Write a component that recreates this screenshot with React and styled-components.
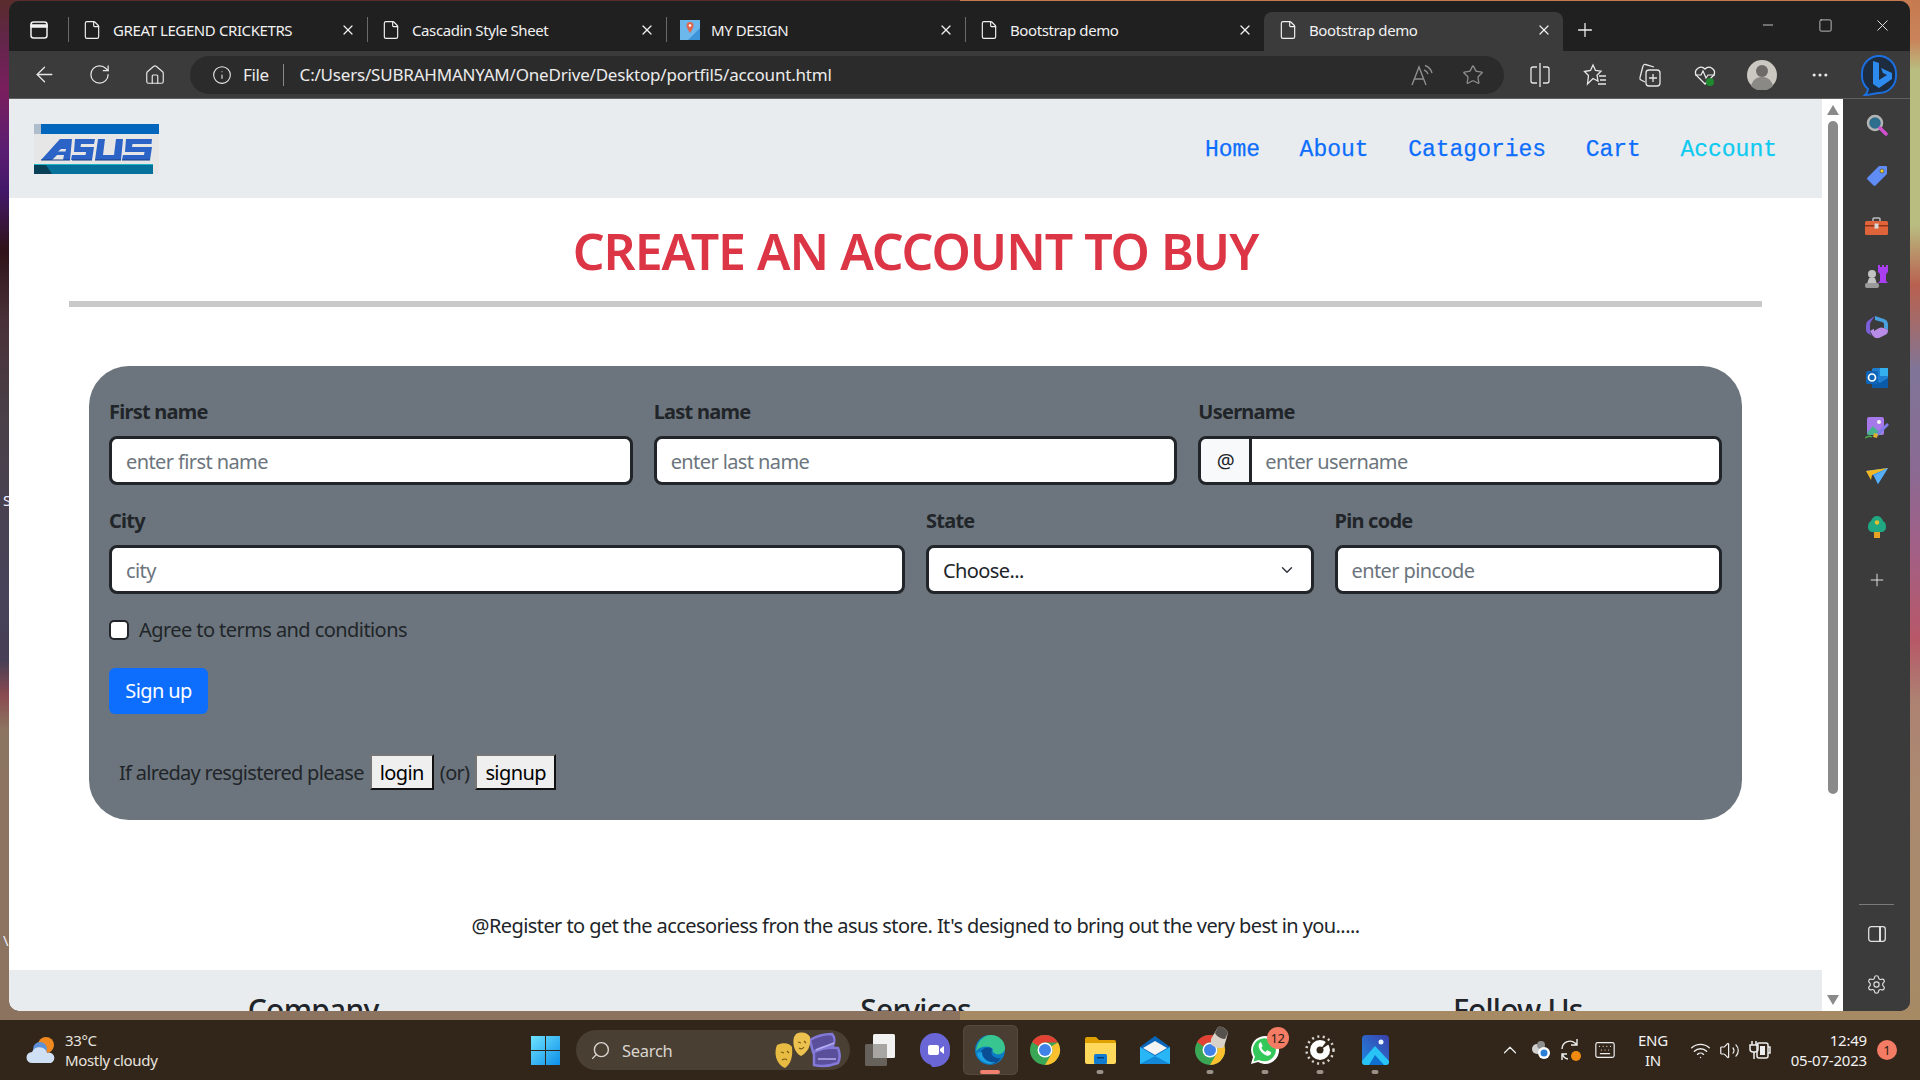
import React from "react";
import styled, { createGlobalStyle } from "styled-components";
import {
  ArrowLeft, RotateCw, Home, Info, Star, Plus, X, Minus, Square, File, MoreHorizontal,
  Settings, ChevronUp, Wifi, Volume2, Keyboard, Search,
} from "lucide-react";

const UI = `"Noto Sans", "Open Sans", sans-serif`;

const Global = createGlobalStyle`
  html, body { margin: 0; padding: 0; width: 1920px; height: 1080px; overflow: hidden; }
  * { box-sizing: border-box; }
  body { font-family: ${UI}; }
`;

const Desktop = styled.div`
  position: relative;
  width: 1920px;
  height: 1080px;
  display: flex;
  flex-direction: column;
  overflow: hidden;
  background:
    linear-gradient(180deg, #c77a50 0, #c9835a 40px, #b9bd80 70px, #b9bd80 225px, #b96050 285px, #a46a68 320px, #7f7598 370px, #8a6a92 470px, #a06088 540px, #b85868 640px, #ad8272 700px, #ab8a70 800px, #a68a64 1020px) right / 50% 100% no-repeat,
    linear-gradient(180deg, #5a2c2c 0, #62264a 40px, #7a1e5e 90px, #5a1e72 150px, #45186a 190px, #2f1319 250px, #4a3038 320px, #4a4048 420px, #47425a 600px, #463f55 660px, #8a4a50 695px, #8c7560 730px, #8b7360 1020px) left / 50% 100% no-repeat;
`;

const DesktopGlyph = styled.span`
  position: absolute;
  left: 3px;
  top: ${(p) => p.$top}px;
  font: 15px ${UI};
  color: #eef;
`;

const Window = styled.div`
  position: relative;
  z-index: 1;
  width: 1901px;
  height: 1010px;
  margin: 1px 0 0 9px;
  border-radius: 10px;
  overflow: hidden;
  display: flex;
  flex-direction: column;
  background: #3b3b3b;
`;

const TabStrip = styled.div`
  flex: none;
  height: 50px;
  display: flex;
  align-items: flex-end;
  background: #202020;
`;

const TabActions = styled.div`
  flex: none;
  width: 59px;
  height: 39px;
  display: flex;
  align-items: center;
  justify-content: center;
  padding-bottom: 4px;
`;

const Tab = styled.div`
  flex: none;
  width: 299px;
  height: 39px;
  display: flex;
  align-items: center;
  padding: 0 11px 3px 14px;
  color: #f1f1f1;
  border-radius: 8px 8px 0 0;
  background: ${(p) => (p.$active ? "#3b3b3b" : "transparent")};
  position: relative;
  &::before {
    content: "";
    display: ${(p) => (p.$active ? "none" : "block")};
    position: absolute;
    left: 0;
    top: 5px;
    height: 25px;
    width: 1px;
    background: #6a6a6a;
  }
`;

const TabTitle = styled.span`
  margin-left: 11px;
  flex: 1;
  font-size: 15px;
  letter-spacing: -0.4px;
  white-space: nowrap;
`;

const NewTab = styled.div`
  flex: none;
  width: 44px;
  height: 39px;
  display: flex;
  align-items: center;
  justify-content: center;
  padding-bottom: 3px;
  color: #eee;
`;

const WindowControls = styled.div`
  margin-left: auto;
  margin-right: -1.5px;
  align-self: flex-start;
  display: flex;
`;

const WindowButton = styled.div`
  width: 57.5px;
  height: 48px;
  display: flex;
  align-items: center;
  justify-content: center;
  color: #e8e8e8;
`;

const Toolbar = styled.div`
  flex: none;
  height: 48px;
  display: flex;
  align-items: center;
  padding-left: 8px;
  background: #3b3b3b;
  border-bottom: 1px solid #606060;
`;

const ToolButton = styled.div`
  flex: none;
  width: ${(p) => p.$w || 55}px;
  height: 38px;
  display: flex;
  align-items: center;
  justify-content: center;
  color: #e6e6e6;
`;

const AddressPill = styled.div`
  flex: none;
  width: 1314px;
  height: 38px;
  margin: 0 8px;
  border-radius: 19px;
  background: #2b2b2b;
  display: flex;
  align-items: center;
  padding: 0 20px 0 22px;
  color: #ececec;
  font-size: 17px;
  letter-spacing: -0.2px;
`;

const SiteLabel = styled.span`
  margin-left: 11px;
  letter-spacing: -0.4px;
`;

const AddressDivider = styled.span`
  width: 1px;
  height: 22px;
  background: #8a8a8a;
  margin: 0 16px 0 14px;
`;

const PillActions = styled.div`
  margin-left: auto;
  display: flex;
  align-items: center;
  gap: 29px;
  color: #8e8e8e;
`;

const Main = styled.div`
  flex: 1;
  min-height: 0;
  display: flex;
`;

const Viewport = styled.div`
  flex: none;
  width: 1813px;
  background: #fff;
  overflow: hidden;
  border-bottom-left-radius: 10px;
`;

const NavBar = styled.nav`
  height: 99px;
  display: flex;
  align-items: center;
  justify-content: space-between;
  padding: 0 45px 0 25px;
  background: #e9ecef;
`;

const NavLinks = styled.div`
  display: flex;
  gap: 39.5px;
  padding-top: 2px;
`;

const NavLink = styled.a`
  font-family: "Liberation Mono", monospace;
  font-size: 23px;
  color: ${(p) => (p.$current ? "#0dcaf0" : "#0d6efd")};
  -webkit-text-stroke: 0.25px currentColor;
`;

const Title = styled.h1`
  margin: 0;
  padding-top: 20px;
  height: 96px;
  text-align: center;
  font-size: 50px;
  line-height: 66px;
  font-weight: 600;
  letter-spacing: -1.02px;
  color: #dc3545;
`;

const Rule = styled.div`
  height: 6px;
  margin: 7px 60px 0;
  background: #c9c9c9;
`;

const Panel = styled.form`
  margin: 59px 80px 0;
  padding: 31px 20px 30px;
  height: 454px;
  background: #6c757d;
  border-radius: 40px;
  display: flex;
  flex-direction: column;
  font-size: 20px;
  letter-spacing: -0.6px;
  color: #212529;
`;

const FieldRow = styled.div`
  display: grid;
  grid-template-columns: ${(p) => p.$cols};
  column-gap: 21px;
  margin-bottom: 21px;
`;

const Field = styled.div`
  display: flex;
  flex-direction: column;
  min-width: 0;
`;

const FieldLabel = styled.label`
  height: 30px;
  line-height: 30px;
  margin-bottom: 9px;
  font-weight: 700;
  letter-spacing: -0.75px;
`;

const TextInput = styled.input`
  width: 100%;
  height: 49px;
  padding: 2px 14px 0;
  border: 3px solid #212529;
  border-radius: 8px;
  background: #fff;
  font: 20px ${UI};
  letter-spacing: -0.6px;
  color: #212529;
  outline: none;
  &::placeholder { color: #6c757d; opacity: 1; }
`;

const InputGroup = styled.div`
  display: flex;
  height: 49px;
  border: 3px solid #212529;
  border-radius: 8px;
  overflow: hidden;
`;

const GroupAddon = styled.span`
  flex: none;
  width: 51px;
  display: flex;
  align-items: center;
  justify-content: center;
  background: #f8f9fa;
  border-right: 3px solid #212529;
`;

const GroupInput = styled.input`
  flex: 1;
  min-width: 0;
  border: 0;
  padding: 2px 13px 0;
  font: 20px ${UI};
  letter-spacing: -0.6px;
  outline: none;
  &::placeholder { color: #6c757d; opacity: 1; }
`;

const SelectInput = styled.select`
  width: 100%;
  height: 49px;
  padding: 2px 14px 0;
  border: 3px solid #212529;
  border-radius: 8px;
  appearance: none;
  font: 20px ${UI};
  letter-spacing: -0.6px;
  color: #212529;
  background: #fff url("data:image/svg+xml,%3csvg xmlns='http://www.w3.org/2000/svg' viewBox='0 0 16 16'%3e%3cpath fill='none' stroke='%23343a40' stroke-linecap='round' stroke-linejoin='round' stroke-width='2' d='m2 5 6 6 6-6'/%3e%3c/svg%3e") no-repeat right 16px center / 16px 12px;
`;

const CheckRow = styled.label`
  height: 30px;
  display: flex;
  align-items: center;
  gap: 10px;
`;

const CheckText = styled.span`
  letter-spacing: -0.57px;
`;

const Checkbox = styled.input`
  appearance: none;
  flex: none;
  width: 20px;
  height: 20px;
  margin: 0;
  border: 2.5px solid #212529;
  border-radius: 5px;
  background: #fff;
`;

const SubmitButton = styled.button`
  align-self: flex-start;
  width: 99px;
  height: 47px;
  margin-top: 23px;
  border: 0;
  border-radius: 6px;
  background: #0d6efd;
  color: #fff;
  font: 20px ${UI};
  letter-spacing: -0.6px;
`;

const LoginLine = styled.div`
  margin-top: 40px;
  padding-left: 10px;
  height: 36px;
  display: flex;
  align-items: center;
  gap: 6px;
  white-space: pre;
  letter-spacing: -0.7px;
`;

const PlainButton = styled.button`
  height: 36px;
  padding: 0 8px;
  background: #efefef;
  color: #000;
  border: 2px solid;
  border-color: #767676 #111 #111 #767676;
  font: 20px ${UI};
  letter-spacing: -0.6px;
`;

const Tagline = styled.p`
  margin: 91px 0 29px;
  height: 30px;
  line-height: 30px;
  text-align: center;
  font-size: 20px;
  letter-spacing: -0.58px;
  color: #212529;
`;

const Footer = styled.footer`
  height: 120px;
  padding: 21px 3px 0;
  background: #e9ecef;
  display: grid;
  grid-template-columns: repeat(3, 1fr);
`;

const FooterTitle = styled.h4`
  margin: 0;
  text-align: center;
  font-size: 30px;
  line-height: 38px;
  font-weight: 500;
  letter-spacing: -0.8px;
  color: #212529;
`;

const ScrollBar = styled.div`
  flex: none;
  width: 21px;
  background: #fff;
  display: flex;
  flex-direction: column;
  align-items: center;
`;

const ScrollArrow = styled.div`
  flex: none;
  height: 22px;
  display: flex;
  align-items: center;
  justify-content: center;
  margin-top: ${(p) => (p.$bottom ? "auto" : "0")};
  svg { display: block; }
`;

const ScrollThumb = styled.div`
  flex: none;
  width: 10px;
  height: 673px;
  border-radius: 5px;
  background: #8a8a8a;
`;

const SideBar = styled.aside`
  flex: 1;
  display: flex;
  flex-direction: column;
  align-items: center;
  padding: 1px 0 2px;
  background: #3b3b3b;
`;

const SideSlot = styled.div`
  flex: none;
  width: 100%;
  height: ${(p) => p.$h || 50.5}px;
  display: flex;
  align-items: center;
  justify-content: center;
  color: #e0e0e0;
`;

const SideDivider = styled.div`
  flex: none;
  width: 35px;
  height: 1px;
  margin-top: auto;
  margin-bottom: 4px;
  background: #7a7a7a;
`;

const Taskbar = styled.footer`
  position: relative;
  z-index: 1;
  flex: none;
  margin-top: auto;
  height: 60px;
  display: flex;
  align-items: center;
  padding: 0 23px 0 26px;
  background: #32261b;
  color: #f2f2f2;
`;

const Weather = styled.div`
  flex: none;
  width: 490px;
  display: flex;
  align-items: center;
  gap: 8px;
`;

const WeatherText = styled.div`
  font-size: 15px;
  line-height: 20px;
  letter-spacing: -0.35px;
  color: #e8e4df;
`;

const StartSlot = styled.div`
  flex: none;
  width: 58px;
  display: flex;
  justify-content: center;
`;

const SearchPill = styled.div`
  flex: none;
  width: 274px;
  height: 40px;
  margin-left: 2px;
  border-radius: 20px;
  background: #4a3f33;
  display: flex;
  align-items: center;
  padding: 0 8px 0 14px;
  gap: 11px;
  color: #d9d5cf;
  font-size: 16.5px;
  letter-spacing: -0.3px;
`;

const SearchArt = styled.div`
  margin-left: auto;
  display: flex;
`;

const AppSlot = styled.div`
  position: relative;
  flex: none;
  width: 55px;
  height: 50px;
  display: flex;
  align-items: center;
  justify-content: center;
  margin-left: ${(p) => p.$ml || 0}px;
  border-radius: 6px;
  background: ${(p) => (p.$active ? "#4a3e32" : "transparent")};
  box-shadow: ${(p) => (p.$active ? "inset 0 0 0 1px #55493c" : "none")};
`;

const RunDot = styled.span`
  position: absolute;
  bottom: 1px;
  left: 50%;
  transform: translateX(-50%);
  width: ${(p) => (p.$active ? 20 : 7)}px;
  height: 4px;
  border-radius: 2px;
  background: ${(p) => (p.$active ? "#f08070" : "#9a9288")};
`;

const CountBadge = styled.span`
  position: absolute;
  top: 2px;
  right: 4px;
  min-width: 22px;
  height: 22px;
  border-radius: 11px;
  background: #f47c64;
  color: #2a1d14;
  font-size: 13px;
  letter-spacing: -0.5px;
  display: flex;
  align-items: center;
  justify-content: center;
`;

const AppOverlay = styled.span`
  position: absolute;
  top: 1px;
  right: 9px;
  display: flex;
`;

const Tray = styled.div`
  margin-left: auto;
  display: flex;
  align-items: center;
`;

const TraySlot = styled.div`
  flex: none;
  width: ${(p) => p.$w}px;
  display: flex;
  align-items: center;
  justify-content: ${(p) => p.$justify || "center"};
  color: #eee;
`;

const TrayText = styled.div`
  font-size: 15px;
  line-height: 20px;
  letter-spacing: -0.2px;
  text-align: ${(p) => p.$align || "center"};
  color: #f2f2f2;
`;

const NotifyBadge = styled.span`
  flex: none;
  width: 20px;
  height: 20px;
  margin-left: 10px;
  border-radius: 50%;
  background: #f47c64;
  color: #2a1d14;
  font-size: 13px;
  display: flex;
  align-items: center;
  justify-content: center;
`;

const AsusLogo = () => (
  <svg width="125" height="50" viewBox="0 0 125 50">
    <rect width="125" height="50" fill="#e6e6e6" />
    <rect width="125" height="10" fill="#0366bd" />
    <rect width="7" height="10" fill="#aebccb" />
    <rect y="41" width="119" height="9" fill="#06729c" />
    <rect y="40" width="119" height="1" fill="#1fb5c4" />
    <path d="M0 41h12l6 9H0z" fill="#0a3f58" />
    <g fill="#2c63c6">
      <path d="M7 36 L26 15 H38 L36 36 H29 L30 31 H23 L18 36Z" />
      <path d="M41 15H61L60 20H47L46.500 23H60L58 36H37L38 31H51.500L52 28H40Z" />
      <path d="M64 15H71L69 31H80L82 15H89L87 36H61Z" />
      <path d="M92 15H118L117.500 20H98.500L98 23H118L116 36H88L89 31H110L110.500 28H91Z" />
    </g>
    <path d="M27 25h5l-.4 2.500H24z" fill="#e6e6e6" />
    <path d="M7 36H36M38 36H58M61 36H87M88 36H116" stroke="#173f88" strokeWidth="1" />
  </svg>
);

const WindowsLogo = () => (
  <svg width="29" height="29" viewBox="0 0 29 29">
    <defs>
      <linearGradient id="w" x1="0" y1="0" x2="1" y2="1">
        <stop offset="0" stopColor="#6fe3ff" />
        <stop offset="1" stopColor="#0c8fe8" />
      </linearGradient>
    </defs>
    <path fill="url(#w)" d="M0 0h14v14H0zM15 0h14v14H15zM0 15h14v14H0zM15 15h14v14H15z" />
  </svg>
);

const WeatherIcon = () => (
  <svg width="31" height="28" viewBox="0 0 31 28">
    <circle cx="20" cy="9" r="8" fill="#f08a20" />
    <circle cx="14" cy="13" r="7" fill="#5d92d8" />
    <path d="M6 27a5.500 5.500 0 0 1 0-11 8 8 0 0 1 15 1 5 5 0 0 1 4 10z" fill="#cfe0f5" />
  </svg>
);

const EdgeIcon = ({ size = 32 }) => (
  <svg width={size} height={size} viewBox="0 0 32 32">
    <circle cx="16" cy="16" r="15" fill="#0c7cc4" />
    <path d="M2 17C3 7 10 1 17 1c8 0 14 6 14 13 0 5-5 7-9 6-3-1-4-3-3-5-4-4-13-3-17 2z" fill="#39c58f" />
    <path d="M6 19c2-5 8-7 12-4-2 5 1 10 9 9-3 5-8 7-13 6C8 29 5 24 6 19z" fill="#0a4f96" />
    <path d="M3 19c1 6 7 11 13 11 2 0 4-1 5-2-8 1-13-4-13-10z" fill="#1ba1e2" />
  </svg>
);

const ChromeIcon = ({ size = 32 }) => (
  <svg width={size} height={size} viewBox="0 0 32 32">
    <circle cx="16" cy="16" r="15" fill="#3aa757" />
    <path d="M16 1a15 15 0 0 1 13 7.500H16a7.500 7.500 0 0 0-6.500 3.750L3 8A15 15 0 0 1 16 1z" fill="#e34133" />
    <path d="M29 8.500A15 15 0 0 1 16 31l6.500-11.250A7.500 7.500 0 0 0 22.500 12.200z" fill="#fbc02d" />
    <circle cx="16" cy="16" r="7.500" fill="#fff" />
    <circle cx="16" cy="16" r="6" fill="#3f83e8" />
  </svg>
);

const BrushOverlay = () => (
  <svg width="20" height="26" viewBox="0 0 20 26">
    <path d="M2 13 9 1c4-1 9 2 10 6L15 21c-3 2-10 1-13-3z" fill="#d9d2c8" />
    <path d="M9 1c4-1 9 2 10 6l-3 6c-3 0-8-2-10-6z" fill="#55524e" />
  </svg>
);

const FilesIcon = () => (
  <svg width="31" height="28" viewBox="0 0 31 28">
    <path d="M0 3a2 2 0 0 1 2-2h9l3 3h15a2 2 0 0 1 2 2v3H0z" fill="#e0a100" />
    <path d="M0 7h31v19a2 2 0 0 1-2 2H2a2 2 0 0 1-2-2z" fill="#ffd85c" />
    <rect x="9" y="18" width="13" height="10" rx="1.500" fill="#0f7bd1" />
    <rect x="12" y="21" width="7" height="1.500" fill="#063e78" />
  </svg>
);

const MailIcon = () => (
  <svg width="30" height="28" viewBox="0 0 30 28">
    <path d="M15 0 30 11v17H0V11z" fill="#0a66b8" />
    <path d="M15 5 27 12 15 19 3 12z" fill="#f4f4f4" />
    <path d="M0 11l15 9 15-9v17H0z" fill="#29b6f6" />
    <path d="M0 28 15 20l15 8z" fill="#1488d8" />
  </svg>
);

const WhatsAppIcon = () => (
  <svg width="32" height="32" viewBox="0 0 32 32">
    <path d="M2 30l2-7A14 14 0 1 1 9 28z" fill="#fff" />
    <path d="M4.500 27.500 6 22.500A11.500 11.500 0 1 1 10 26z" fill="#34c75a" />
    <path d="M11 8.500c-1.500 1.500-2 3.500-.5 6.500 1.500 3 4 5.500 7 6.500 2 .7 4-.3 4.500-2 .2-1 0-1.300-.7-1.700l-2.500-1.300c-.6-.3-1-.1-1.400.4l-.8 1c-2-.8-3.500-2.300-4.300-4.200l.8-.8c.4-.4.5-.8.3-1.300l-1-2.500c-.3-.8-1-1-1.400-.6z" fill="#fff" />
  </svg>
);

const ClockAppIcon = () => (
  <svg width="30" height="30" viewBox="0 0 30 30">
    <circle cx="15" cy="15" r="13.500" fill="none" stroke="#d8d5d0" strokeWidth="2.500" strokeDasharray="2 3.500" />
    <circle cx="15" cy="15" r="10" fill="#fff" />
    <path d="M15 15 22 5.500l3 3z" fill="#32261b" />
    <circle cx="15" cy="15" r="3.500" fill="#32261b" />
  </svg>
);

const PhotosIcon = () => (
  <svg width="27" height="30" viewBox="0 0 27 30">
    <defs>
      <linearGradient id="ph" x1="0" y1="1" x2="1" y2="0">
        <stop offset="0" stopColor="#1e88e5" />
        <stop offset="1" stopColor="#3b3fa8" />
      </linearGradient>
    </defs>
    <rect width="27" height="30" rx="4" fill="url(#ph)" />
    <circle cx="19" cy="7" r="2.500" fill="#e8f4ff" />
    <path d="M0 26 13 11l14 15v1a3 3 0 0 1-3 3H3a3 3 0 0 1-3-3z" fill="#29c4f6" />
    <path d="M7 30 13 20l9 10z" fill="#0e6fd0" />
  </svg>
);

const TaskViewIcon = () => (
  <svg width="30" height="32" viewBox="0 0 30 32">
    <rect x="8" width="22" height="24" rx="1.500" fill="#f2f2f2" />
    <rect y="10" width="22" height="22" rx="1.500" fill="#6a6660" opacity=".92" />
    <rect x="8" y="10" width="14" height="14" fill="#a8a6a2" />
  </svg>
);

const MeetIcon = () => (
  <svg width="30" height="34" viewBox="0 0 30 34">
    <path d="M15 0a15 15 0 0 1 15 15v4a15 15 0 0 1-15 15 3 3 0 0 1-4-2 15 15 0 0 1-11-13v-4A15 15 0 0 1 15 0z" fill="#6a66d6" />
    <rect x="8" y="12" width="11" height="10" rx="2" fill="#fff" />
    <path d="M20 16l4-3v8l-4-3z" fill="#fff" />
  </svg>
);

const MasksArt = () => (
  <svg width="68" height="38" viewBox="0 0 68 38">
    <g stroke="#8379d8" strokeWidth="2.500" fill="#5a4f9a">
      <path d="M36 9c8-5 15-6 22-6 3 3 3 8 1 12-8 0-14 2-20 6z" />
      <path d="M40 21c8-4 16-5 24-4 2 5 2 11 0 15-8 3-16 4-24 2z" />
    </g>
    <path d="M42 19 60 12M44 28h18" stroke="#b6aef0" strokeWidth="1.500" />
    <path d="M22 3c6-3 12-1 14 3 1 9-2 15-9 19-6-3-9-11-7-19z" fill="#edc14f" />
    <path d="M3 14c6-3 13-2 15 2 1 9-1 17-7 21-7-3-11-11-9-20z" fill="#e8bb42" />
    <path d="M24 11l3 1M30 10l2 2M7 21l3 1M13 20l2 2M25 17q3 2 5-1M8 29q3-2 5 0" stroke="#7a5a10" strokeWidth="1.200" fill="none" />
  </svg>
);

const ReadAloud = () => (
  <svg width="22" height="24" viewBox="0 0 22 24" fill="none" stroke="currentColor" strokeWidth="1.400">
    <path d="M1 22 8 4l7 18M3.500 16h9" />
    <path d="M13 7a6 6 0 0 1 4 4M14 2.500A11 11 0 0 1 21 10" />
  </svg>
);

const SplitIcon = () => (
  <svg width="20" height="24" viewBox="0 0 20 24" fill="none" stroke="currentColor" strokeWidth="1.300">
    <path d="M10 0v24" />
    <path d="M7 4H3a2 2 0 0 0-2 2v12a2 2 0 0 0 2 2h4M13 4h4a2 2 0 0 1 2 2v12a2 2 0 0 1-2 2h-4" />
  </svg>
);

const FavoritesIcon = () => (
  <svg width="24" height="24" viewBox="0 0 24 24" fill="none" stroke="currentColor" strokeWidth="1.300">
    <path d="M10 2l2.500 5.500 5.500.7-4 4 1 5.800L10 15.500 4.500 21 5.500 12.500 1.500 8.500l6-1z" />
    <path d="M16 13h7M17 17h6M15 21h8" />
  </svg>
);

const CollectionsIcon = () => (
  <svg width="24" height="26" viewBox="0 0 24 26" fill="none" stroke="currentColor" strokeWidth="1.300">
    <path d="M7 20 3 18a2 2 0 0 1-1-2.500L5 4a2 2 0 0 1 2.500-1.500L16 5" />
    <rect x="8" y="8" width="14" height="16" rx="3" />
    <path d="M15 12v8M11 16h8" />
  </svg>
);

const HealthIcon = () => (
  <svg width="24" height="24" viewBox="0 0 24 24" fill="none">
    <path d="M12 21 3 12a5.500 5.500 0 0 1 9-6 5.500 5.500 0 0 1 9 6z" stroke="#eee" strokeWidth="1.300" />
    <path d="M2 12h6l2-4 3 7 2-3h7" stroke="#eee" strokeWidth="1.200" />
    <circle cx="17" cy="19" r="4" fill="#1f8a2e" />
  </svg>
);

const ProfileIcon = () => (
  <svg width="30" height="30" viewBox="0 0 30 30">
    <circle cx="15" cy="15" r="15" fill="#cbc8c2" />
    <circle cx="15" cy="11" r="6" fill="#6d6b68" />
    <path d="M4 26c2-7 6-9 11-9s9 2 11 9a15 15 0 0 1-22 0z" fill="#8b8986" />
  </svg>
);

const BingIcon = () => (
  <svg width="38" height="42" viewBox="0 0 38 42">
    <path d="M19 2a17 17 0 0 1 17 17v4a17 17 0 0 1-17 16c-4 0-9 2-14 2 2-2 3-4 3-6A17 17 0 0 1 2 21v-2A17 17 0 0 1 19 2z" fill="#1e2c40" stroke="#1b6fe0" strokeWidth="2" />
    <path d="M13 7l6 2v17l8-5-4-2-2-5 11 5v6L19 34l-6-4z" fill="#2d8bf0" />
  </svg>
);

const TabsIcon = () => (
  <svg width="18" height="18" viewBox="0 0 18 18" fill="none" stroke="#f2f2f2" strokeWidth="1.500">
    <rect x="1" y="1" width="16" height="16" rx="2.500" />
    <path d="M1 4h16v2H1z" fill="#f2f2f2" />
  </svg>
);

const PlaceTabIcon = () => (
  <svg width="20" height="20" viewBox="0 0 20 20">
    <rect width="20" height="20" fill="#6cb7ec" />
    <path d="M8 20 20 8v12z" fill="#3e94d8" />
    <path d="M10 2a3.500 3.500 0 0 1 3.500 3.500C13.500 8 10 13 10 13S6.500 8 6.500 5.500A3.500 3.500 0 0 1 10 2z" fill="#e0664d" />
    <circle cx="10" cy="5.500" r="1.300" fill="#fff" />
  </svg>
);

const SideSearch = () => (
  <svg width="22" height="22" viewBox="0 0 22 22">
    <circle cx="9" cy="9" r="7" fill="#2d6d8e" stroke="#b4b4b4" strokeWidth="2.500" />
    <path d="M14 14l6 6" stroke="#d050d0" strokeWidth="3.500" strokeLinecap="round" />
  </svg>
);

const SideTag = () => (
  <svg width="22" height="22" viewBox="0 0 22 22">
    <path d="M13 1h7a1 1 0 0 1 1 1v7L9.500 20.500a1.500 1.500 0 0 1-2 0L1.500 14.500a1.500 1.500 0 0 1 0-2z" fill="#5f8cf5" />
    <circle cx="16" cy="6" r="2" fill="#f2d027" stroke="#3b3b3b" strokeWidth=".6" />
  </svg>
);

const SideTool = () => (
  <svg width="23" height="18" viewBox="0 0 23 18">
    <path d="M8 4V2a1 1 0 0 1 1-1h5a1 1 0 0 1 1 1v2" fill="none" stroke="#bdbdbd" strokeWidth="1.500" />
    <rect y="4" width="23" height="14" rx="1.500" fill="#e0643a" />
    <rect y="8" width="23" height="1.500" fill="#8e3218" />
    <rect x="9.500" y="6.500" width="4" height="5" fill="#d8d8d8" />
  </svg>
);

const SideGames = () => (
  <svg width="24" height="24" viewBox="0 0 24 24">
    <path d="M13 0h2v2h2V0h2v2h2V0h2v7l-2 2v7l2 2H13l2-2V9l-2-2z" fill="#a93ff0" />
    <circle cx="7" cy="9" r="4" fill="#c2c2c2" />
    <path d="M4 13h6l2 6H2z" fill="#c2c2c2" />
    <rect x="0" y="18" width="14" height="5" rx="2" fill="#9a9a9a" />
  </svg>
);

const SideCopilot = () => (
  <svg width="22" height="22" viewBox="0 0 22 22">
    <path d="M9 0l9 3c3 1 4 3 4 6v5l-4-2V8c0-1-1-2-2-2L9 4z" fill="#48a0de" />
    <path d="M9 0 3 4C1 5 0 7 0 10v3c0 3 1 4 3 5l4 2c-2-1-3-3-3-5V9c0-2 1-4 2-5z" fill="#7b5fd8" />
    <path d="M4 15l7-4 7 1 4 2c0 3-1 4-3 5l-6 3c-2 1-4 0-6-2z" fill="#b98ce8" />
    <path d="M8 7l7 4-7 4z" fill="#3b3b3b" />
  </svg>
);

const SideOutlook = () => (
  <svg width="22" height="20" viewBox="0 0 22 20">
    <rect x="6" y="0" width="16" height="20" rx="1.500" fill="#1e7fd1" />
    <path d="M6 10l8 5 8-5v10H6z" fill="#0a5aa8" />
    <rect x="14" y="0" width="8" height="8" fill="#35b0ee" />
    <rect y="3" width="12" height="13" rx="1.500" fill="#0d64b8" />
    <circle cx="6" cy="9.500" r="3.500" fill="none" stroke="#fff" strokeWidth="1.700" />
  </svg>
);

const SideDesigner = () => (
  <svg width="24" height="22" viewBox="0 0 24 22">
    <rect x="2" width="17" height="18" rx="2" fill="#a678ea" />
    <path d="M2 16l6-7 8 8-1 1H4a2 2 0 0 1-2-2z" fill="#47b38e" />
    <circle cx="14" cy="5" r="2" fill="#f2f2f2" />
    <path d="M11 17 22 6l2 2-11 11z" fill="#7d7de8" />
    <path d="M9 16l4 1-1 4-4-1z" fill="#e0b030" />
    <path d="M0 21q4-3 7-1" stroke="#4cb050" strokeWidth="1.400" fill="none" />
  </svg>
);

const SideSend = () => (
  <svg width="22" height="22" viewBox="0 0 22 22">
    <path d="M0 3 22 0 12 16 8 8z" fill="#3e9bf0" />
    <path d="M0 3l22-3L6 7l-1 5z" fill="#f2b824" />
    <path d="M22 0 8 8l4 8z" fill="#57aef5" />
  </svg>
);

const SideTree = () => (
  <svg width="18" height="26" viewBox="0 0 18 26">
    <rect x="6" y="14" width="6" height="8" fill="#e8a325" />
    <path d="M9 0c3 0 5 2 6 5 2 1 3 3 3 6 0 3-2 5-5 5H5c-3 0-5-2-5-5 0-3 1-5 3-6 1-3 3-5 6-5z" fill="#1fa882" />
    <circle cx="9" cy="6.500" r="2.200" fill="#e8c030" />
  </svg>
);

const SidePanelIcon = () => (
  <svg width="18" height="16" viewBox="0 0 18 16" fill="none" stroke="currentColor" strokeWidth="1.300">
    <rect x=".7" y=".7" width="16.600" height="14.600" rx="2.500" />
    <path d="M12 1v14" strokeWidth="2" />
  </svg>
);

const CloudTray = () => (
  <svg width="22" height="20" viewBox="0 0 22 20">
    <circle cx="8" cy="9" r="5" fill="#d0d0d0" />
    <circle cx="12" cy="5" r="4" fill="#8f8f8f" />
    <circle cx="15" cy="13" r="6" fill="#fff" />
    <circle cx="15" cy="13" r="3.500" fill="#2a7fd6" />
  </svg>
);

const SyncTray = () => (
  <svg width="22" height="24" viewBox="0 0 22 24" fill="none" stroke="#eee" strokeWidth="1.400">
    <path d="M2 11a8 8 0 0 1 13-6l2 2M17 1v6h-6" />
    <path d="M2 16l2 3a7 7 0 0 0 4 2M2 22v-6h5" />
    <circle cx="16" cy="18" r="5" fill="#f08a10" stroke="none" />
  </svg>
);

const BatteryTray = () => (
  <svg width="22" height="22" viewBox="0 0 22 22" fill="none" stroke="#eee" strokeWidth="1.500">
    <rect x="8" y="4" width="11" height="15" rx="2" />
    <rect x="11" y="7" width="5" height="9" fill="#eee" stroke="none" />
    <path d="M19 8h2v6h-2M3 2v4M7 2v4M1 6h8v4a3 3 0 0 1-3 3H4a3 3 0 0 1-3-3zM5 13v7" />
  </svg>
);

const tabs = [
  { title: "GREAT LEGEND CRICKETRS" },
  { title: "Cascadin Style Sheet" },
  { title: "MY DESIGN", icon: <PlaceTabIcon /> },
  { title: "Bootstrap demo" },
  { title: "Bootstrap demo", active: true },
];

const navItems = ["Home", "About", "Catagories", "Cart", "Account"];

const sideIcons = [SideSearch, SideTag, SideTool, SideGames, SideCopilot, SideOutlook, SideDesigner, SideSend, SideTree];

export default function App() {
  return (
    <Desktop>
      <Global />
      <DesktopGlyph $top={490}>S</DesktopGlyph>
      <DesktopGlyph $top={930}>\</DesktopGlyph>
      <Window>
        <TabStrip>
          <TabActions><TabsIcon /></TabActions>
          {tabs.map((t, i) => (
            <Tab key={i} $active={t.active}>
              {t.icon || <File size={20} strokeWidth={1.4} />}
              <TabTitle>{t.title}</TabTitle>
              <X size={16} strokeWidth={1.8} />
            </Tab>
          ))}
          <NewTab><Plus size={22} strokeWidth={1.4} /></NewTab>
          <WindowControls>
            <WindowButton><Minus size={16} strokeWidth={1.2} /></WindowButton>
            <WindowButton><Square size={15} strokeWidth={1.2} /></WindowButton>
            <WindowButton><X size={19} strokeWidth={1.2} /></WindowButton>
          </WindowControls>
        </TabStrip>
        <Toolbar>
          <ToolButton><ArrowLeft size={25} strokeWidth={1.3} /></ToolButton>
          <ToolButton><RotateCw size={23} strokeWidth={1.3} /></ToolButton>
          <ToolButton><Home size={22} strokeWidth={1.3} /></ToolButton>
          <AddressPill>
            <Info size={20} strokeWidth={1.3} />
            <SiteLabel>File</SiteLabel>
            <AddressDivider />
            <span>C:/Users/SUBRAHMANYAM/OneDrive/Desktop/portfil5/account.html</span>
            <PillActions>
              <ReadAloud />
              <Star size={22} strokeWidth={1.4} />
            </PillActions>
          </AddressPill>
          <ToolButton><SplitIcon /></ToolButton>
          <ToolButton><FavoritesIcon /></ToolButton>
          <ToolButton><CollectionsIcon /></ToolButton>
          <ToolButton><HealthIcon /></ToolButton>
          <ToolButton $w={60}><ProfileIcon /></ToolButton>
          <ToolButton><MoreHorizontal size={20} strokeWidth={1.8} /></ToolButton>
          <ToolButton $w={63}><BingIcon /></ToolButton>
        </Toolbar>
        <Main>
          <Viewport>
            <NavBar>
              <AsusLogo />
              <NavLinks>
                {navItems.map((n) => (
                  <NavLink key={n} $current={n === "Account"}>{n}</NavLink>
                ))}
              </NavLinks>
            </NavBar>
            <Title>CREATE AN ACCOUNT TO BUY</Title>
            <Rule />
            <Panel>
              <FieldRow $cols="1fr 1fr 1fr">
                <Field>
                  <FieldLabel>First name</FieldLabel>
                  <TextInput placeholder="enter first name" />
                </Field>
                <Field>
                  <FieldLabel>Last name</FieldLabel>
                  <TextInput placeholder="enter last name" />
                </Field>
                <Field>
                  <FieldLabel>Username</FieldLabel>
                  <InputGroup>
                    <GroupAddon>@</GroupAddon>
                    <GroupInput placeholder="enter username" />
                  </InputGroup>
                </Field>
              </FieldRow>
              <FieldRow $cols="calc(50% - 10.5px) 1fr 1fr">
                <Field>
                  <FieldLabel>City</FieldLabel>
                  <TextInput placeholder="city" />
                </Field>
                <Field>
                  <FieldLabel>State</FieldLabel>
                  <SelectInput defaultValue="">
                    <option value="">Choose...</option>
                  </SelectInput>
                </Field>
                <Field>
                  <FieldLabel>Pin code</FieldLabel>
                  <TextInput placeholder="enter pincode" />
                </Field>
              </FieldRow>
              <CheckRow>
                <Checkbox type="checkbox" />
                <CheckText>Agree to terms and conditions</CheckText>
              </CheckRow>
              <SubmitButton type="button">Sign up</SubmitButton>
              <LoginLine>
                If alreday resgistered please
                <PlainButton type="button">login</PlainButton>
                (or)
                <PlainButton type="button">signup</PlainButton>
              </LoginLine>
            </Panel>
            <Tagline>@Register to get the accesoriess fron the asus store. It's designed to bring out the very best in you.....</Tagline>
            <Footer>
              <FooterTitle>Company</FooterTitle>
              <FooterTitle>Services</FooterTitle>
              <FooterTitle>Follow Us</FooterTitle>
            </Footer>
          </Viewport>
          <ScrollBar>
            <ScrollArrow>
              <svg width="12" height="10" viewBox="0 0 12 10"><path d="M6 0l6 10H0z" fill="#8a8a8a" /></svg>
            </ScrollArrow>
            <ScrollThumb />
            <ScrollArrow $bottom>
              <svg width="12" height="10" viewBox="0 0 12 10"><path d="M6 10 0 0h12z" fill="#8a8a8a" /></svg>
            </ScrollArrow>
          </ScrollBar>
          <SideBar>
            {sideIcons.map((Icon, i) => (
              <SideSlot key={i}><Icon /></SideSlot>
            ))}
            <SideSlot><Plus size={20} strokeWidth={1.2} /></SideSlot>
            <SideDivider />
            <SideSlot $h={50}><SidePanelIcon /></SideSlot>
            <SideSlot $h={50}><Settings size={21} strokeWidth={1.3} /></SideSlot>
          </SideBar>
        </Main>
      </Window>
      <Taskbar>
        <Weather>
          <WeatherIcon />
          <WeatherText>33°C<br />Mostly cloudy</WeatherText>
        </Weather>
        <StartSlot><WindowsLogo /></StartSlot>
        <SearchPill>
          <Search size={21} strokeWidth={1.6} style={{ transform: "scaleX(-1)" }} />
          Search
          <SearchArt><MasksArt /></SearchArt>
        </SearchPill>
        <AppSlot $ml={2.5}><TaskViewIcon /></AppSlot>
        <AppSlot><MeetIcon /></AppSlot>
        <AppSlot $active><EdgeIcon /><RunDot $active /></AppSlot>
        <AppSlot><ChromeIcon /></AppSlot>
        <AppSlot><FilesIcon /><RunDot /></AppSlot>
        <AppSlot><MailIcon /></AppSlot>
        <AppSlot><ChromeIcon /><AppOverlay><BrushOverlay /></AppOverlay><RunDot /></AppSlot>
        <AppSlot><WhatsAppIcon /><CountBadge>12</CountBadge><RunDot /></AppSlot>
        <AppSlot><ClockAppIcon /><RunDot /></AppSlot>
        <AppSlot><PhotosIcon /><RunDot /></AppSlot>
        <Tray>
          <TraySlot $w={36}><ChevronUp size={22} strokeWidth={1.3} /></TraySlot>
          <TraySlot $w={24}><CloudTray /></TraySlot>
          <TraySlot $w={38}><SyncTray /></TraySlot>
          <TraySlot $w={30}><Keyboard size={22} strokeWidth={1.3} /></TraySlot>
          <TraySlot $w={66}><TrayText>ENG<br />IN</TrayText></TraySlot>
          <TraySlot $w={28}><Wifi size={21} strokeWidth={1.6} /></TraySlot>
          <TraySlot $w={31}><Volume2 size={21} strokeWidth={1.4} /></TraySlot>
          <TraySlot $w={30}><BatteryTray /></TraySlot>
          <TraySlot $w={92} $justify="flex-end"><TrayText $align="right">12:49<br />05-07-2023</TrayText></TraySlot>
          <NotifyBadge>1</NotifyBadge>
        </Tray>
      </Taskbar>
    </Desktop>
  );
}
